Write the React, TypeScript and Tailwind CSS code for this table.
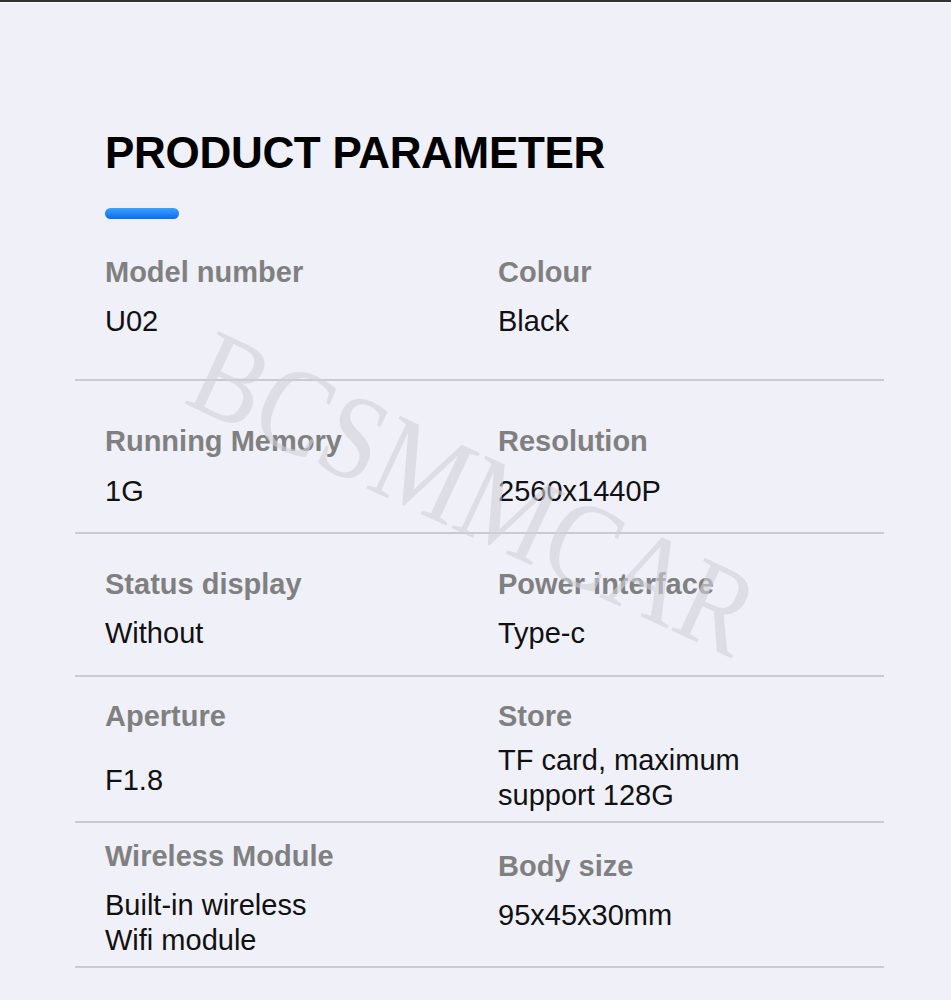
import React from "react";

type Cell = {
  label: string;
  value: string[];
  pt: string;
  mt: string;
};

type Row = {
  h: string;
  left: Cell;
  right: Cell;
};

const rows: Row[] = [
  {
    h: "h-[162px]",
    left: { label: "Model number", value: ["U02"], pt: "pt-[35px]", mt: "mt-[14px]" },
    right: { label: "Colour", value: ["Black"], pt: "pt-[35px]", mt: "mt-[14px]" },
  },
  {
    h: "h-[153px]",
    left: { label: "Running Memory", value: ["1G"], pt: "pt-[42px]", mt: "mt-[15px]" },
    right: { label: "Resolution", value: ["2560x1440P"], pt: "pt-[42px]", mt: "mt-[15px]" },
  },
  {
    h: "h-[143px]",
    left: { label: "Status display", value: ["Without"], pt: "pt-[32px]", mt: "mt-[14px]" },
    right: { label: "Power interface", value: ["Type-c"], pt: "pt-[32px]", mt: "mt-[14px]" },
  },
  {
    h: "h-[146px]",
    left: { label: "Aperture", value: ["F1.8"], pt: "pt-[21px]", mt: "mt-[29px]" },
    right: {
      label: "Store",
      value: ["TF card, maximum", "support 128G"],
      pt: "pt-[21px]",
      mt: "mt-[9px]",
    },
  },
  {
    h: "h-[145px]",
    left: {
      label: "Wireless Module",
      value: ["Built-in wireless", "Wifi module"],
      pt: "pt-[15px]",
      mt: "mt-[14px]",
    },
    right: { label: "Body size", value: ["95x45x30mm"], pt: "pt-[25px]", mt: "mt-[14px]" },
  },
];

function CellView({ c }: { c: Cell }) {
  return (
    <div className={c.pt}>
      <div className="text-[29px] leading-[36px] font-bold text-[#808080] whitespace-nowrap">
        {c.label}
      </div>
      <div className={`${c.mt} text-[29px] leading-[35px] text-[#111111]`}>
        {c.value.map((v, i) => (
          <div key={i} className="whitespace-nowrap">
            {v}
          </div>
        ))}
      </div>
    </div>
  );
}

export default function App() {
  return (
    <div
      className="relative w-[951px] h-[1000px] overflow-hidden bg-[#f0f0f9]"
      style={{ fontFamily: '"Liberation Sans", Arial, sans-serif' }}
    >
      <div className="h-[2px] bg-[#333333]" />
      <div className="h-[1px] bg-[#fbfbfd]" />

      <div className="pl-[105px]">
        <h1 className="mt-[128px] text-[44px] leading-[44px] font-bold tracking-[-0.3px] text-black">
          PRODUCT PARAMETER
        </h1>
        <div className="mt-[33px] h-[11px] w-[74px] rounded-full bg-gradient-to-b from-[#3aa0ff] to-[#0a6cf0]" />
      </div>

      <div className="ml-[75px] mr-[67px]">
        {rows.map((r, i) => (
          <div
            key={i}
            className={`${r.h} box-border border-b-2 border-[#cacad2] pl-[30px] grid grid-cols-[393px_1fr]`}
          >
            <CellView c={r.left} />
            <CellView c={r.right} />
          </div>
        ))}
      </div>

      <div className="pointer-events-none absolute left-[474px] top-[494px] w-0 h-0">
        <div
          className="absolute -translate-x-1/2 -translate-y-1/2 rotate-[25deg] scale-y-[1.15] whitespace-nowrap text-[106px] leading-none text-[#d0d0d8]/60"
          style={{ fontFamily: '"Liberation Serif", "Times New Roman", serif' }}
        >
          BCSMMCAR
        </div>
      </div>
    </div>
  );
}
